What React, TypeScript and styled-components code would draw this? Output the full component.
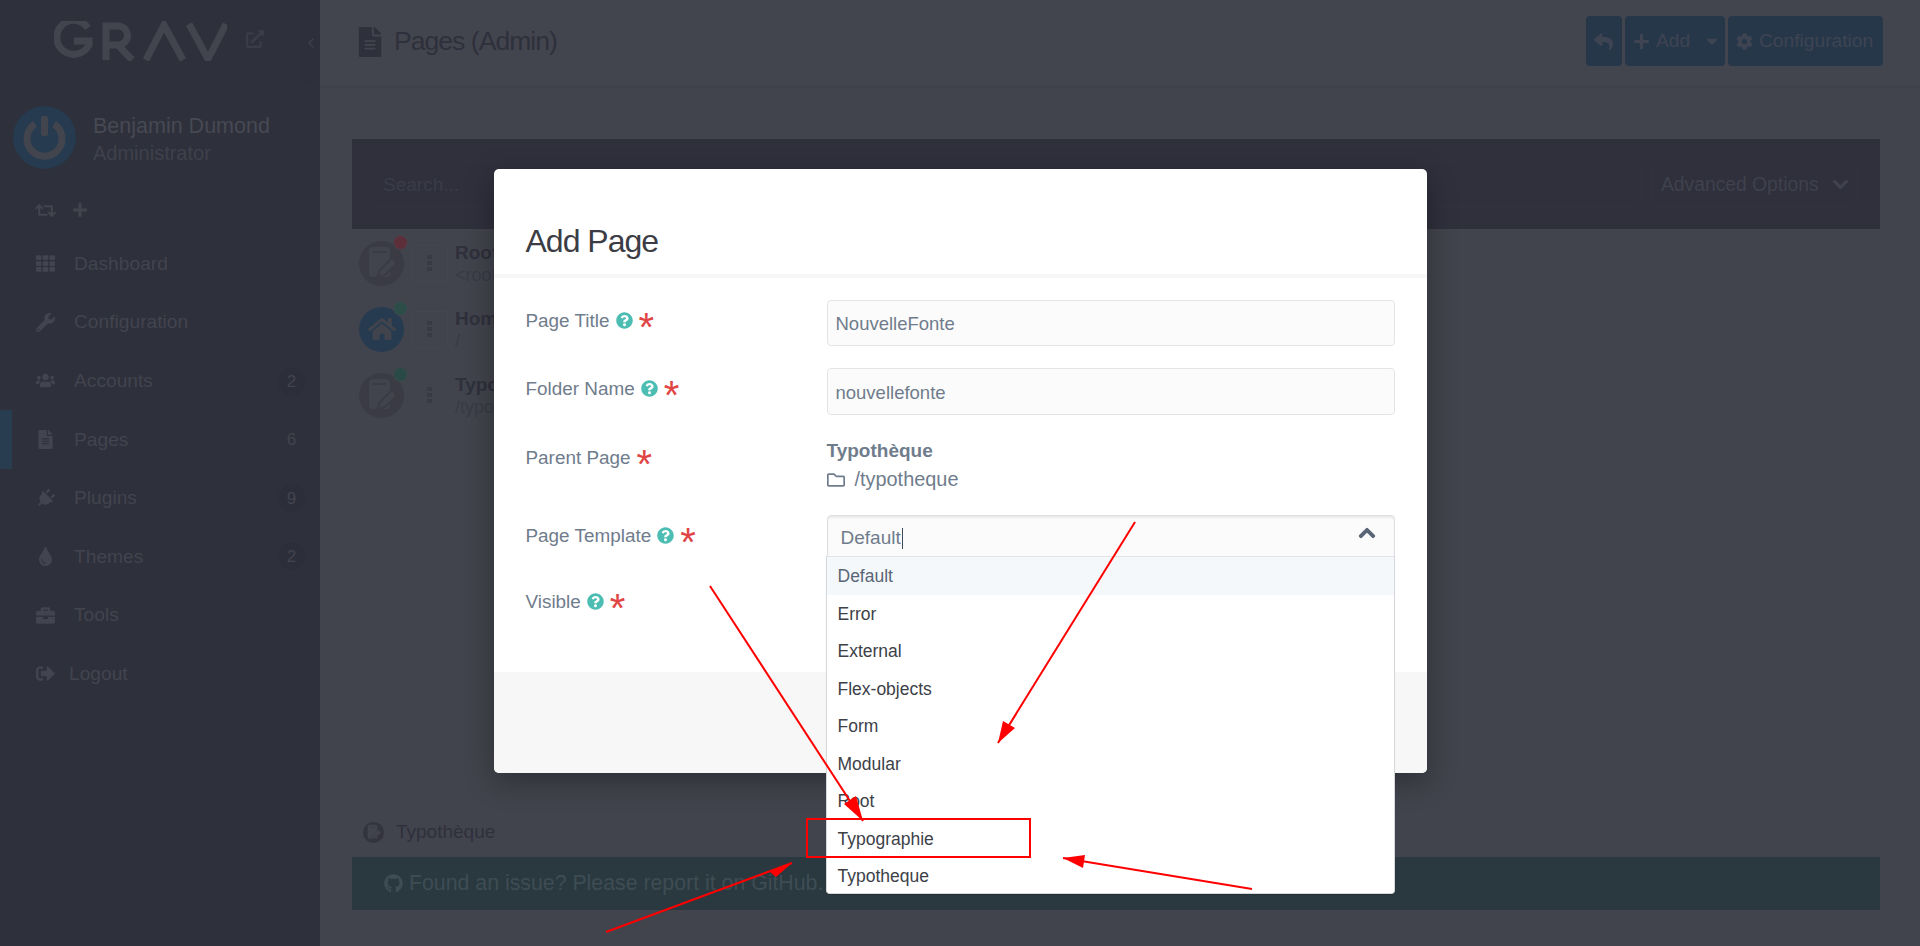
import styled, { createGlobalStyle } from "styled-components"
import {
  FaBriefcase,
  FaCaretDown,
  FaChevronDown,
  FaChevronUp,
  FaCog,
  FaExternalLinkAlt,
  FaFileAlt,
  FaGithub,
  FaHome,
  FaPlug,
  FaPlus,
  FaQuestionCircle,
  FaRegFolder,
  FaReply,
  FaRetweet,
  FaSignOutAlt,
  FaTh,
  FaTint,
  FaUsers,
  FaWrench,
} from "react-icons/fa"
import { FiChevronLeft } from "react-icons/fi"
import type { ReactNode } from "react"

const GlobalStyle = createGlobalStyle`
  html, body {
    margin: 0;
    padding: 0;
    height: 100%;
    overflow: hidden;
    background: #42444d;
    font-family: "Liberation Sans", Arial, sans-serif;
  }
  * { box-sizing: border-box; }
`

const TiltedPlug = styled(FaPlug)`
  transform: rotate(45deg);
`

type NavEntry = { label: string; icon: ReactNode; count?: number; active?: boolean }

const navItems: NavEntry[] = [
  { label: "Dashboard", icon: <FaTh /> },
  { label: "Configuration", icon: <FaWrench /> },
  { label: "Accounts", icon: <FaUsers size={23} />, count: 2 },
  { label: "Pages", icon: <FaFileAlt />, count: 6, active: true },
  { label: "Plugins", icon: <TiltedPlug />, count: 9 },
  { label: "Themes", icon: <FaTint />, count: 2 },
  { label: "Tools", icon: <FaBriefcase /> },
]

const templates = [
  "Error",
  "External",
  "Flex-objects",
  "Form",
  "Modular",
  "Root",
  "Typographie",
  "Typotheque",
]

function Logo() {
  return (
    <LogoSvg viewBox="0 0 173 40" width="173" height="40">
      <path d="M34 7 A17 17 0 1 0 35 24 L35 20 L20 20" />
      <path d="M52 39 V5 H64 A9.5 9.5 0 0 1 64 24 H52 M64 24 L78 39" />
      <path d="M92 39 L110 4 L129 39" />
      <path d="M135 3 L154 38 L172 3" />
    </LogoSvg>
  )
}

function PageGlyph({ size = 45 }: { size?: number }) {
  return (
    <svg viewBox="0 0 45 45" width={size} height={size}>
      <rect x="10" y="6" width="21" height="30" rx="4" fill="#42444d" />
      <rect x="14" y="10" width="13" height="2" fill="#3a3b44" />
      <path d="M18 36 L21 29 L33 17 L38 22 L26 34 Z" fill="#42444d" stroke="#3a3b44" strokeWidth="2" />
    </svg>
  )
}

function Arrow({ from, tip, head }: { from: string; tip: string; head: string }) {
  return (
    <>
      <line x1={from.split(",")[0]} y1={from.split(",")[1]} x2={tip.split(",")[0]} y2={tip.split(",")[1]} />
      <polygon points={`${tip} ${head}`} />
    </>
  )
}

function Field({ label, help = true, children, $gap }: { label: string; help?: boolean; children?: ReactNode; $gap: number }) {
  return (
    <FormRow $gap={$gap}>
      <FieldLabel>
        {label}
        {help && (
          <HelpIcon>
            <FaQuestionCircle />
          </HelpIcon>
        )}
        <Required>*</Required>
      </FieldLabel>
      <FieldBody>{children}</FieldBody>
    </FormRow>
  )
}

export default function App() {
  return (
    <Page>
      <GlobalStyle />
      <Sidebar>
        <LogoBar>
          <Logo />
          <OpenSite>
            <FaExternalLinkAlt />
          </OpenSite>
          <Collapse>
            <FiChevronLeft />
          </Collapse>
        </LogoBar>
        <UserBlock>
          <Avatar>
            <svg viewBox="0 0 63 63" width="63" height="63">
              <path d="M22 18 A17.5 17.5 0 1 0 41 18" fill="none" stroke="#42444e" strokeWidth="7" />
              <rect x="28" y="10" width="7" height="20" rx="2" fill="#42444e" />
            </svg>
          </Avatar>
          <UserText>
            <UserName>Benjamin Dumond</UserName>
            <UserRole>Administrator</UserRole>
          </UserText>
        </UserBlock>
        <QuickActions>
          <FaRetweet size={21} />
          <FaPlus size={16} />
        </QuickActions>
        <Nav>
          {navItems.map((item) => (
            <NavItem key={item.label} $active={item.active}>
              <NavIcon>{item.icon}</NavIcon>
              <span>{item.label}</span>
              {item.count !== undefined && <Badge $active={item.active}>{item.count}</Badge>}
            </NavItem>
          ))}
          <NavItem $logout>
            <NavIcon>
              <FaSignOutAlt />
            </NavIcon>
            <span>Logout</span>
          </NavItem>
        </Nav>
      </Sidebar>

      <Main>
        <TitleBar>
          <Title>
            <FaFileAlt size={30} />
            <span>Pages (Admin)</span>
          </Title>
          <Actions>
            <ActionButton $narrow>
              <FaReply size={19} />
            </ActionButton>
            <ActionButton $wide>
              <FaPlus size={17} />
              Add
              <CaretSlot>
                <FaCaretDown size={18} />
              </CaretSlot>
            </ActionButton>
            <ActionButton>
              <FaCog size={17} />
              Configuration
            </ActionButton>
          </Actions>
        </TitleBar>

        <SearchPanel>
          <SearchBox>Search...</SearchBox>
          <AdvancedBox>
            Advanced Options
            <FaChevronDown size={17} stroke="currentColor" strokeWidth={30} />
          </AdvancedBox>
        </SearchPanel>

        <PageList>
          <PageRow>
            <PageCircle>
              <PageGlyph />
              <StatusDot $color="#5d2f3a" />
            </PageCircle>
            <Handle>
              <Grip />
            </Handle>
            <div>
              <PageName>Root</PageName>
              <PagePath>&lt;root&gt;</PagePath>
            </div>
          </PageRow>
          <PageRow>
            <PageCircle $home>
              <FaHome size={28} />
              <StatusDot $color="#2c4d48" />
            </PageCircle>
            <Handle>
              <Grip />
            </Handle>
            <div>
              <PageName>Home</PageName>
              <PagePath>/</PagePath>
            </div>
          </PageRow>
          <PageRow>
            <PageCircle>
              <PageGlyph />
              <StatusDot $color="#294a47" />
            </PageCircle>
            <Handle $faint>
              <Grip />
            </Handle>
            <div>
              <PageName>Typothèque</PageName>
              <PagePath>/typotheque</PagePath>
            </div>
          </PageRow>
        </PageList>

        <Crumb>
          <CrumbDot>
            <PageGlyph size={21} />
          </CrumbDot>
          Typothèque
        </Crumb>
        <IssueBar>
          <FaGithub size={19} />
          Found an issue? Please report it on GitHub.
        </IssueBar>
      </Main>

      <Backdrop>
        <Modal>
          <ModalHead>Add Page</ModalHead>
          <ModalBody>
            <Field label="Page Title" $gap={22}>
              <TextInput readOnly value="NouvelleFonte" />
            </Field>
            <Field label="Folder Name" $gap={22}>
              <TextInput $tall readOnly value="nouvellefonte" />
            </Field>
            <Field label="Parent Page" help={false} $gap={21}>
              <ParentName>Typothèque</ParentName>
              <ParentPath>
                <FaRegFolder size={18} />
                /typotheque
              </ParentPath>
            </Field>
            <Field label="Page Template" $gap={24}>
              <SelectBox>
                <SelectValue>
                  Default
                  <Cursor />
                </SelectValue>
                <SelectChevron>
                  <FaChevronUp size={18} stroke="currentColor" strokeWidth={30} />
                </SelectChevron>
                <Dropdown>
                  <Option $current>Default</Option>
                  {templates.map((name) => (
                    <Option key={name}>{name}</Option>
                  ))}
                </Dropdown>
              </SelectBox>
            </Field>
            <Field label="Visible" $gap={0} />
          </ModalBody>
          <ModalFoot />
        </Modal>
      </Backdrop>

      <Annotations viewBox="0 0 1920 946" width="1920" height="946">
        <rect x="807" y="819" width="223" height="38" />
        <Arrow from="710,586" tip="863,821" head="856,796 844,804" />
        <Arrow from="1135,522" tip="998,743" head="1003,721 1015,728" />
        <Arrow from="1252,889" tip="1063,858" head="1085,855 1083,868" />
        <Arrow from="606,932" tip="792,863" head="770,872 776,877" />
      </Annotations>
    </Page>
  )
}

const Page = styled.div`
  position: relative;
  display: flex;
  width: 1920px;
  height: 946px;
  overflow: hidden;
  background: #42444d;
`

const Sidebar = styled.aside`
  width: 320px;
  flex: none;
  background: #2e303b;
  color: #41434e;
`

const LogoBar = styled.div`
  position: relative;
  height: 86px;
  padding: 21px 0 0 54px;
  display: flex;
  align-items: flex-start;
`

const LogoSvg = styled.svg`
  fill: none;
  stroke: #42444e;
  stroke-width: 7;
`

const OpenSite = styled.div`
  margin: 9px 0 0 19px;
  font-size: 18px;
  color: #3a3c48;
  line-height: 1;
`

const Collapse = styled.div`
  position: absolute;
  top: 0;
  right: 0;
  width: 18px;
  height: 86px;
  background: #2d2f3a;
  color: #3e404c;
  display: flex;
  align-items: center;
  justify-content: center;
  font-size: 16px;
`

const UserBlock = styled.div`
  display: flex;
  align-items: center;
  gap: 17px;
  padding: 20px 0 0 13px;
`

const Avatar = styled.div`
  width: 63px;
  height: 63px;
  flex: none;
  border-radius: 50%;
  background: #263b4f;
  line-height: 0;
`

const UserText = styled.div`
  padding-top: 4px;
`

const UserName = styled.div`
  font-size: 21.5px;
  line-height: 27px;
  color: #474953;
`

const UserRole = styled.div`
  font-size: 20px;
  line-height: 27px;
  color: #3f414c;
`

const QuickActions = styled.div`
  display: flex;
  align-items: center;
  gap: 16px;
  height: 20px;
  margin-top: 31px;
  padding-left: 35px;
  color: #42444e;
`

const Nav = styled.nav`
  margin-top: 14.5px;
`

const NavItem = styled.div<{ $active?: boolean; $logout?: boolean }>`
  position: relative;
  display: flex;
  align-items: center;
  height: 58.6px;
  padding-left: 36px;
  font-size: 19.2px;
  color: #42444f;
  ${(p) => (p.$active ? "box-shadow: inset 12px 0 0 #283e50;" : "")}

  span {
    margin-left: ${(p) => (p.$logout ? "14px" : "19px")};
  }
`

const NavIcon = styled.div`
  width: 19px;
  font-size: 19px;
  line-height: 0;
  display: flex;
  justify-content: center;
  color: #42444f;
`

const Badge = styled.div<{ $active?: boolean }>`
  position: absolute;
  left: 278px;
  top: 16px;
  width: 27px;
  height: 27px;
  border-radius: 50%;
  background: ${(p) => (p.$active ? "transparent" : "#2c2e39")};
  color: #42444f;
  font-size: 17px;
  line-height: 27px;
  text-align: center;
`

const Main = styled.main`
  flex: 1;
  min-width: 0;
  display: flex;
  flex-direction: column;
`

const TitleBar = styled.header`
  height: 86px;
  padding: 16px 37px 0 32px;
  display: flex;
  justify-content: space-between;
  align-items: flex-start;
  background: #43454e;
  box-shadow: 0 1px 3px rgba(0, 0, 0, 0.06);
`

const Title = styled.h1`
  margin: 10px 0 0 3px;
  display: flex;
  align-items: center;
  gap: 9px;
  font-size: 26.6px;
  font-weight: 400;
  letter-spacing: -1px;
  color: #2e303c;
`

const Actions = styled.div`
  display: flex;
  gap: 3px;
`

const ActionButton = styled.div<{ $narrow?: boolean; $wide?: boolean }>`
  height: 50px;
  width: ${(p) => (p.$narrow ? "36px" : p.$wide ? "100px" : "155px")};
  padding-left: 8px;
  display: flex;
  align-items: center;
  gap: 6px;
  border-radius: 4px;
  background: #27374a;
  color: #3e4452;
  font-size: 19.2px;
`

const CaretSlot = styled.span`
  margin-left: 7px;
  line-height: 0;
`

const SearchPanel = styled.section`
  margin: 53px 40px 0 32px;
  height: 90px;
  padding: 22px;
  padding-left: 21px;
  display: flex;
  gap: 10px;
  background: #2f303c;
`

const SearchBox = styled.div`
  flex: 1;
  height: 47px;
  padding-left: 9px;
  line-height: 45px;
  border: 1px solid #31323e;
  border-radius: 4px;
  font-size: 19px;
  color: #3a3c48;
`

const AdvancedBox = styled.div`
  width: 206px;
  height: 47px;
  padding: 0 8px;
  display: flex;
  align-items: center;
  justify-content: space-between;
  border: 1px solid #31323e;
  border-radius: 4px;
  font-size: 19.3px;
  color: #3f414d;
`

const PageList = styled.div`
  margin: 0 40px 0 32px;
  padding: 1px 0 0 7px;
`

const PageRow = styled.div`
  display: flex;
  align-items: center;
  height: 66px;
`

const PageCircle = styled.div<{ $home?: boolean }>`
  position: relative;
  width: 45px;
  height: 45px;
  flex: none;
  border-radius: 50%;
  background: ${(p) => (p.$home ? "#263b4f" : "#3a3b44")};
  color: #42444d;
  display: flex;
  align-items: center;
  justify-content: center;
`

const StatusDot = styled.span<{ $color: string }>`
  position: absolute;
  top: -6px;
  right: -4px;
  width: 15px;
  height: 15px;
  border-radius: 50%;
  border: 1px solid #454750;
  background: ${(p) => p.$color};
`

const Handle = styled.div<{ $faint?: boolean }>`
  width: 37px;
  height: 37px;
  margin: 0 7px;
  flex: none;
  border: 1px solid ${(p) => (p.$faint ? "#43454e" : "#45474f")};
  border-radius: 3px;
  display: flex;
  align-items: center;
  justify-content: center;
`

const Grip = styled.span`
  width: 5px;
  height: 4px;
  background: #383a45;
  box-shadow: 0 -6px 0 #383a45, 0 6px 0 #383a45;
`

const PageName = styled.div`
  font-size: 19px;
  font-weight: 700;
  line-height: 24px;
  color: #2f303c;
`

const PagePath = styled.div`
  font-size: 18px;
  line-height: 20px;
  color: #383a45;
`

const Crumb = styled.div`
  margin: auto 0 0 43px;
  height: 26px;
  display: flex;
  align-items: center;
  gap: 12px;
  font-size: 19px;
  color: #2f303c;
`

const CrumbDot = styled.span`
  width: 21px;
  height: 21px;
  border-radius: 50%;
  background: #33343e;
  line-height: 0;
`

const IssueBar = styled.div`
  margin: 12px 40px 36px 32px;
  height: 53px;
  padding-left: 32px;
  display: flex;
  align-items: center;
  gap: 6px;
  background: #29393f;
  color: #3f4c54;
  font-size: 21.3px;
`

const Backdrop = styled.div`
  position: absolute;
  inset: 0;
  padding-top: 169px;
  display: flex;
  justify-content: center;
  align-items: flex-start;
`

const Modal = styled.div`
  width: 933px;
  background: #fff;
  border-radius: 5px;
  box-shadow: 0 8px 30px rgba(0, 0, 0, 0.32);
`

const ModalHead = styled.h2`
  margin: 0;
  height: 109px;
  padding: 54px 32px 0;
  border-bottom: 4px solid #f7f7f7;
  font-size: 32px;
  font-weight: 400;
  line-height: 36px;
  letter-spacing: -1px;
  color: #3c3d44;
`

const ModalBody = styled.div`
  height: 394px;
  padding: 22px 32px 0;
`

const ModalFoot = styled.div`
  height: 101px;
  background: #f7f7f7;
  border-radius: 0 0 5px 5px;
`

const FormRow = styled.div<{ $gap: number }>`
  display: flex;
  margin-bottom: ${(p) => p.$gap}px;
`

const FieldLabel = styled.div`
  width: 301px;
  flex: none;
  height: 40px;
  padding-top: 1px;
  display: flex;
  align-items: center;
  font-size: 18.9px;
  color: #6f7c8c;
`

const HelpIcon = styled.span`
  margin-left: 6px;
  line-height: 0;
  font-size: 17px;
  color: #4cbdb2;
`

const Required = styled.span`
  margin-left: 6px;
  height: 26px;
  font-size: 40px;
  line-height: 38px;
  color: #e04444;
`

const FieldBody = styled.div`
  flex: 1;
  min-width: 0;
`

const TextInput = styled.input<{ $tall?: boolean }>`
  display: block;
  width: 100%;
  height: ${(p) => (p.$tall ? "47px" : "46px")};
  padding: 2px 8px 0;
  background: #fbfbfb;
  border: 1px solid #e3e4e6;
  border-radius: 4px;
  outline: none;
  font: inherit;
  font-size: 18.5px;
  color: #6f7c8c;
`

const ParentName = styled.div`
  font-size: 19px;
  font-weight: 700;
  line-height: 28px;
  color: #6f7c8c;
`

const ParentPath = styled.div`
  display: flex;
  align-items: center;
  gap: 10px;
  height: 29px;
  font-size: 19.9px;
  color: #6f7c8c;
`

const SelectBox = styled.div`
  position: relative;
  height: 42px;
  background: #fbfbfb;
  border: 1px solid #dedfe2;
  border-radius: 4px 4px 0 0;
  box-shadow: inset 0 2px 2px rgba(0, 0, 0, 0.07);
`

const SelectValue = styled.div`
  display: flex;
  align-items: center;
  height: 100%;
  padding: 4px 0 0 13px;
  font-size: 19px;
  color: #6f7c8c;
`

const Cursor = styled.span`
  width: 1px;
  height: 21px;
  margin-left: 1px;
  background: #3d4a5c;
`

const SelectChevron = styled.div`
  position: absolute;
  top: 8px;
  right: 18px;
  line-height: 0;
  color: #5a6676;
`

const Dropdown = styled.div`
  position: absolute;
  top: 40px;
  left: -2px;
  right: -1px;
  height: 338px;
  overflow: hidden;
  z-index: 2;
  background: #fff;
  border: 1px solid #d6d7da;
  border-top-color: #e3e4e6;
  border-radius: 0 0 4px 4px;
  box-shadow: 0 1px 1px rgba(0, 0, 0, 0.15);
`

const Option = styled.div<{ $current?: boolean }>`
  height: 37.5px;
  padding-left: 11px;
  line-height: 39.5px;
  font-size: 17.5px;
  background: ${(p) => (p.$current ? "#f4f8fb" : "#fff")};
  color: ${(p) => (p.$current ? "#5a6676" : "#3c4148")};
`

const Annotations = styled.svg`
  position: absolute;
  left: 0;
  top: 0;
  z-index: 3;
  pointer-events: none;

  rect {
    fill: none;
    stroke: #ff0000;
    stroke-width: 2;
  }
  line {
    stroke: #ff0000;
    stroke-width: 2;
  }
  polygon {
    fill: #ff0000;
  }
`
